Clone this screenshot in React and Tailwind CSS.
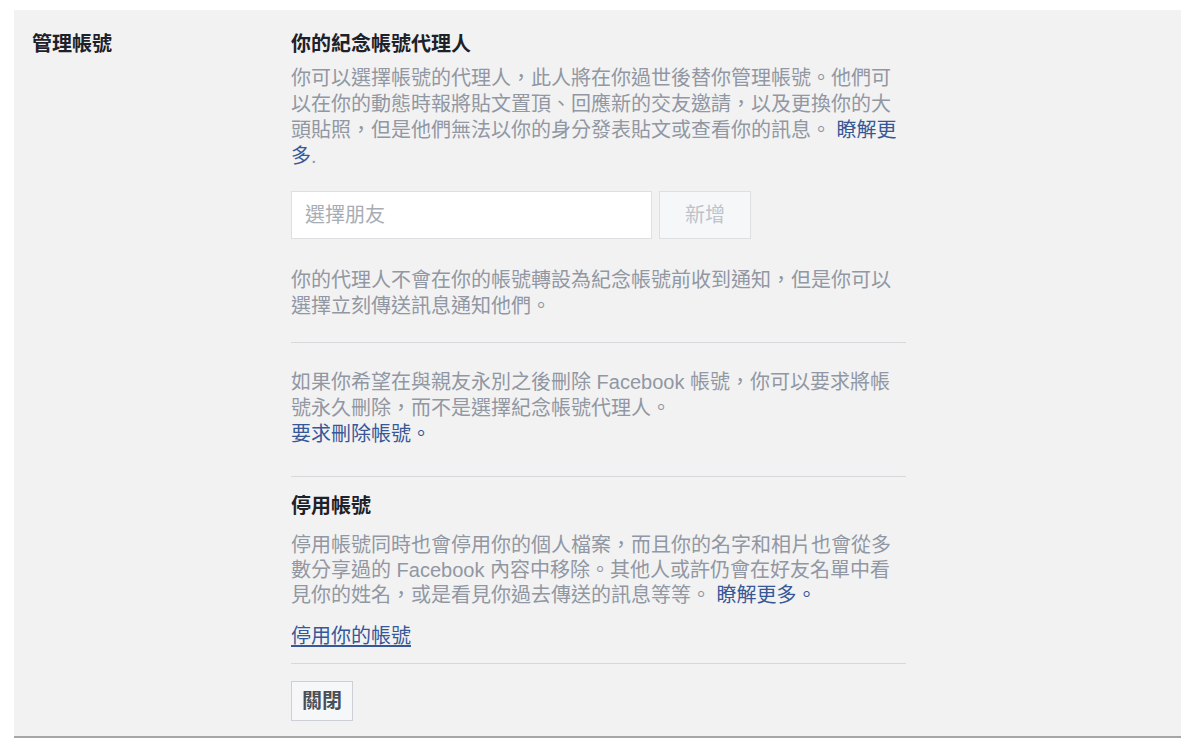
const font = {
  fontFamily: '"Liberation Sans", "Noto Sans CJK TC", sans-serif',
};

function Divider() {
  return <div className="h-px w-full bg-[#d6d8dc]" />;
}

function App() {
  return (
    <div className="min-h-screen bg-white pt-[10px] pl-[14px]" style={font}>
      <div className="flex w-[1167px] h-[728px] bg-[#f2f2f2] border-b-2 border-[#a6a6a6] pl-[18px] pt-[21px]">
        <div className="w-[259px] text-[20px] leading-[26px] font-bold text-[#1d2129]">
          管理帳號
        </div>

        <div className="w-[615px] flex flex-col">
          <h3 className="text-[20px] leading-[26px] font-bold text-[#1d2129]">
            你的紀念帳號代理人
          </h3>
          <p className="mt-[8px] text-[20px] leading-[26px] text-[#9197a3]">
            你可以選擇帳號的代理人，此人將在你過世後替你管理帳號。他們可以在你的動態時報將貼文置頂、回應新的交友邀請，以及更換你的大頭貼照，但是他們無法以你的身分發表貼文或查看你的訊息。{" "}
            <a className="text-[#365899]">瞭解更多</a>.
          </p>

          <div className="mt-[22px] flex gap-[7px]">
            <div className="w-[361px] h-[48px] bg-white border border-[#dddfe2] flex items-center px-[13px] text-[20px] text-[#a8adb5]">
              選擇朋友
            </div>
            <button className="w-[92px] h-[48px] bg-[#f6f7f9] border border-[#dddfe2] text-[20px] text-[#bec3c9]">
              新增
            </button>
          </div>

          <p className="mt-[28px] text-[20px] leading-[26px] text-[#9197a3]">
            你的代理人不會在你的帳號轉設為紀念帳號前收到通知，但是你可以選擇立刻傳送訊息通知他們。
          </p>

          <div className="mt-[23px]">
            <Divider />
          </div>

          <p className="mt-[26px] text-[20px] leading-[26px] text-[#9197a3]">
            如果你希望在與親友永別之後刪除 Facebook 帳號，你可以要求將帳號永久刪除，而不是選擇紀念帳號代理人。
            <br />
            <a className="text-[#365899]">要求刪除帳號。</a>
          </p>

          <div className="mt-[29px]">
            <Divider />
          </div>

          <h3 className="mt-[16px] text-[20px] leading-[26px] font-bold text-[#1d2129]">
            停用帳號
          </h3>
          <p className="mt-[14px] text-[20px] leading-[25px] text-[#9197a3]">
            停用帳號同時也會停用你的個人檔案，而且你的名字和相片也會從多數分享過的 Facebook 內容中移除。其他人或許仍會在好友名單中看見你的姓名，或是看見你過去傳送的訊息等等。{" "}
            <a className="text-[#365899]">瞭解更多。</a>
          </p>

          <a className="mt-[15px] text-[20px] leading-[26px] text-[#365899] underline underline-offset-2">
            停用你的帳號
          </a>

          <div className="mt-[14px]">
            <Divider />
          </div>

          <div className="mt-[17px]">
            <button className="w-[62px] h-[40px] bg-[#f6f7f9] border border-[#ccd0d5] text-[20px] font-bold text-[#4b4f56]">
              關閉
            </button>
          </div>
        </div>
      </div>
    </div>
  );
}

export default App;
